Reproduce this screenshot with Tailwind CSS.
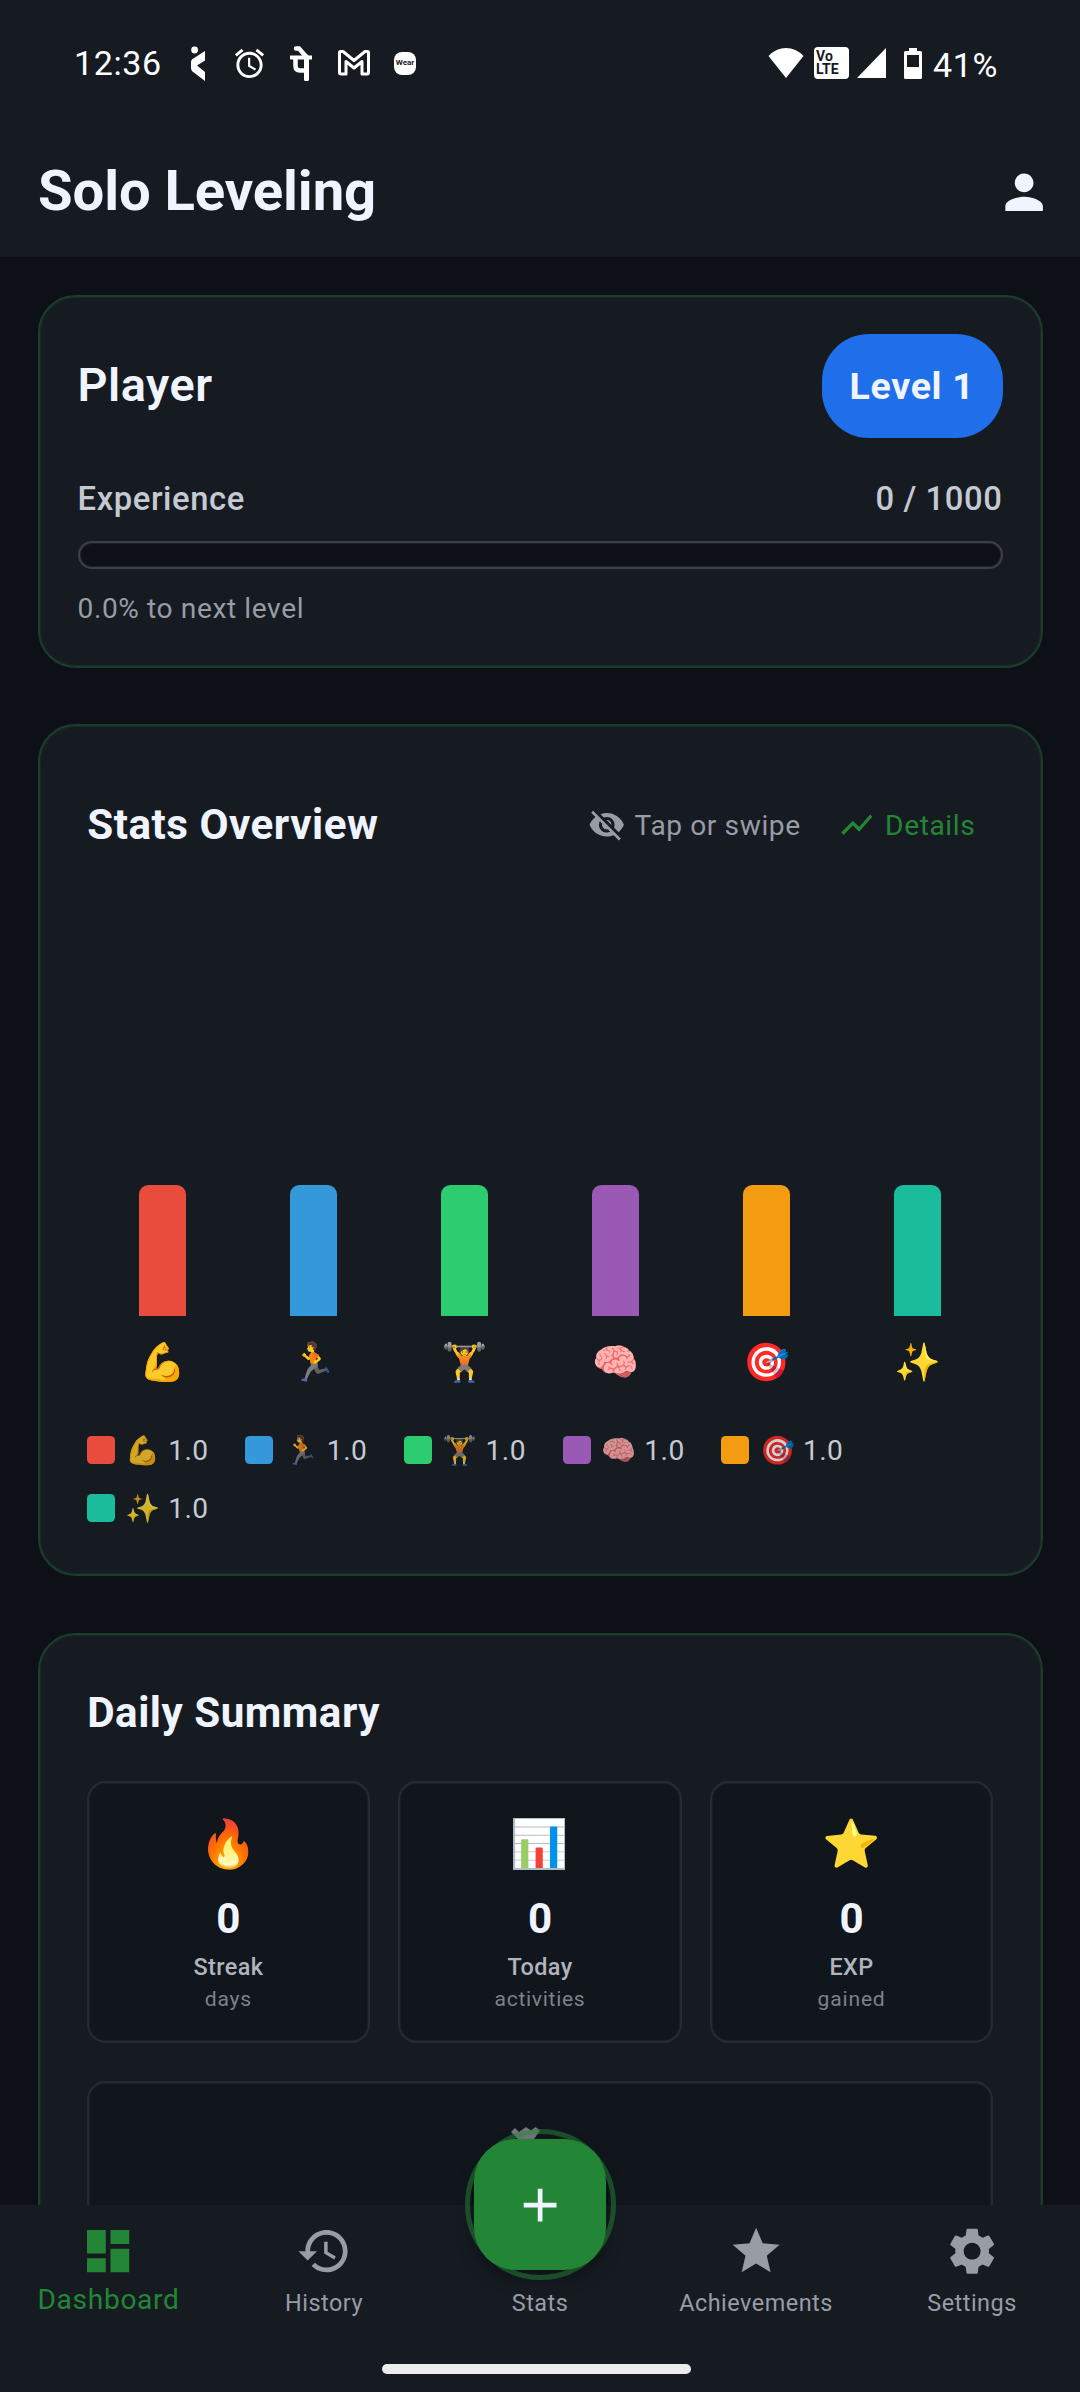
<!DOCTYPE html>
<html lang="en">
<head>
<meta charset="utf-8">
<title>Solo Leveling</title>
<script src="https://cdn.jsdelivr.net/npm/@tailwindcss/browser@4"></script>
</head>
<body class="bg-[#0d1017]">
<div class="flex h-[2392px] w-[1080px] flex-col overflow-hidden bg-[#0d1017] font-['Roboto','Noto_Color_Emoji',sans-serif] text-[#f0f4ff]">

  <header class="h-[257px] shrink-0 bg-[#161b22]">
    <!-- Status bar -->
    <div class="flex h-[124px] items-center justify-between pr-[82px] pl-[74px] pt-[2px] text-white">
      <div class="flex items-center">
        <span class="w-[88px] text-[34px] leading-[40px] tracking-[0.6px]">12:36</span>
        <svg class="ml-[26px] h-[36px] w-[20px]" viewBox="0 0 20 36" fill="currentColor"><circle cx="6.6" cy="5" r="3.4"/><path d="M17 6v9.500l-8 5 8 6.500v9L4.500 26.500Q3 25 3 23v-6q0-2 1.500-3z"/></svg>
        <svg class="ml-[24px] h-[35px] w-[35px]" viewBox="0 0 24 24" fill="currentColor"><path d="M22 5.720l-4.600-3.860-1.290 1.530 4.600 3.860L22 5.720zM7.880 3.390L6.600 1.860 2 5.710l1.290 1.530 4.590-3.850zM12.500 8H11v6l4.750 2.850.75-1.230-4-2.370V8zM12 4c-4.970 0-9 4.030-9 9s4.020 9 9 9c4.970 0 9-4.030 9-9s-4.030-9-9-9zm0 16c-3.870 0-7-3.130-7-7s3.130-7 7-7 7 3.130 7 7-3.130 7-7 7z"/></svg>
        <svg class="ml-[22px] h-[36px] w-[24px]" viewBox="0 0 24 36" fill="none" stroke="currentColor"><path d="M1 12.500h22" stroke-width="4"/><path d="M17.500 12v22" stroke-width="5" stroke-linecap="round"/><path d="M7 3.500h3l7 8" stroke-width="4.500" stroke-linecap="round"/><path d="M6.500 13v8q0 4.500 4.500 4.500h6" stroke-width="4.500"/></svg>
        <svg class="ml-[23.500px] h-[28px] w-[34px]" viewBox="0 0 34 28" fill="none" stroke="currentColor" stroke-width="3" stroke-linejoin="round"><path d="M2.500 3.500q0-1 1-1H6l11 9 11-9h2.500q1 0 1 1v20q0 1.500-1.500 1.500H25V12.500l-8 6.500-8-6.500V25H4q-1.500 0-1.500-1.500z"/></svg>
        <span class="ml-[23.500px] flex h-[23px] w-[22px] items-center justify-center rounded-[8px] bg-white text-[8px] leading-none font-bold text-[#161b22]">Wear</span>
      </div>
      <div class="flex items-center">
        <svg class="h-[30px] w-[36px]" viewBox="0 0 36 30" fill="currentColor"><path d="M18 30L0.500 8Q8 0 18 0t17.500 8z"/></svg>
        <span class="ml-[10px] flex h-[32px] w-[35px] flex-col justify-center rounded-[4px] bg-white pl-[2px] text-[14px] leading-[13.500px] font-bold text-[#161b22]"><span>Vo</span><span>LTE</span></span>
        <svg class="ml-[8px] h-[30px] w-[29px]" viewBox="0 0 29 30" fill="currentColor"><path d="M29 0v30H0z"/></svg>
        <svg class="ml-[18px] h-[31px] w-[18px]" viewBox="0 0 18 31"><path fill="currentColor" fill-rule="evenodd" d="M5 0h8v3h3.500q1.500 0 1.500 1.500v25q0 1.500-1.500 1.500h-15Q0 31 0 29.500v-25Q0 3 1.500 3H5zM3 7v12h12V7z"/></svg>
        <span class="ml-[11px] pt-[4px] text-[34px] leading-[40px] tracking-[0.6px]">41%</span>
      </div>
    </div>
    <!-- App bar -->
    <div class="flex h-[133px] items-center justify-between pr-[28px] pl-[38px]">
      <h1 class="text-[56.250px] leading-[66px] font-bold tracking-[-0.1px]">Solo Leveling</h1>
      <svg class="mt-[3px] h-[56.250px] w-[56.250px]" viewBox="0 0 24 24" fill="currentColor"><path d="M12 12c2.210 0 4-1.790 4-4s-1.790-4-4-4-4 1.790-4 4 1.790 4 4 4zm0 2c-2.670 0-8 1.340-8 4v2h16v-2c0-2.660-5.330-4-8-4z"/></svg>
    </div>
  </header>

  <main class="flex min-h-0 flex-1 flex-col gap-[56.250px] overflow-hidden px-[37.500px] pt-[37.500px]">
    <!-- Player -->
    <section class="h-[373px] shrink-0 rounded-[37.500px] border-2 border-[#1b3d2b] bg-[#161b22] px-[38px] pt-[37.500px] shadow-[inset_0_0_0_1px_rgba(27,61,43,0.4)]">
      <div class="flex h-[104px] items-center justify-between">
        <h2 class="pb-[2px] text-[46.875px] leading-[56px] font-semibold tracking-[0.5px]">Player</h2>
        <span class="flex h-[104px] w-[181px] items-center justify-center rounded-[46.875px] bg-[#1f6feb] text-[37.500px] font-bold tracking-[0.7px]">Level 1</span>
      </div>
      <div class="mt-[38.500px] flex justify-between text-[32.800px] leading-[44px] font-medium tracking-[0.6px] text-[#c5c9d2]">
        <span>Experience</span><span>0 / 1000</span>
      </div>
      <div class="mt-[20px] h-[28px] rounded-full border-2 border-[#3d4147] bg-[#0d1017] shadow-[inset_0_0_0_1px_rgba(61,65,71,0.4)]"></div>
      <p class="mt-[20px] text-[28.125px] leading-[39px] tracking-[0.6px] text-[#989ca5]">0.0% to next level</p>
    </section>

    <!-- Stats overview -->
    <section class="h-[852.500px] shrink-0 rounded-[37.500px] border-2 border-[#1b3d2b] bg-[#161b22] px-[47.200px] pt-[47.200px] shadow-[inset_0_0_0_1px_rgba(27,61,43,0.4)]">
      <div class="flex h-[104px] items-center justify-between">
        <h2 class="pl-[0.500px] text-[42.188px] leading-[50px] font-bold tracking-[0.5px]">Stats Overview</h2>
        <div class="flex items-center pr-[18px] text-[28.125px] leading-[38px] tracking-[0.6px]">
          <span class="flex items-center gap-[9.375px] text-[#989ca5]">
            <svg class="h-[37.500px] w-[37.500px]" viewBox="0 0 24 24" fill="currentColor"><path d="M12 7c2.760 0 5 2.240 5 5 0 .65-.13 1.260-.36 1.830l2.920 2.920c1.510-1.260 2.700-2.890 3.430-4.750-1.730-4.390-6-7.500-11-7.500-1.400 0-2.740.25-3.980.7l2.160 2.160C10.740 7.130 11.350 7 12 7zM2 4.270l2.280 2.280.46.46C3.080 8.300 1.780 10.020 1 12c1.730 4.390 6 7.500 11 7.500 1.550 0 3.030-.3 4.380-.84l.42.42L19.730 22 21 20.730 3.270 3 2 4.270zM7.530 9.800l1.550 1.550c-.05.21-.08.43-.08.65 0 1.660 1.340 3 3 3 .22 0 .44-.03.65-.08l1.550 1.550c-.67.33-1.410.53-2.200.53-2.760 0-5-2.240-5-5 0-.79.2-1.530.53-2.200zm4.310-.78l3.150 3.150.02-.16c0-1.660-1.340-3-3-3l-.17.010z"/></svg>
            <span class="pt-[2px]">Tap or swipe</span>
          </span>
          <span class="ml-[37.500px] flex items-center gap-[9.375px] text-[#238636]">
            <svg class="h-[37.500px] w-[37.500px]" viewBox="0 0 24 24" fill="currentColor"><path d="M3.500 18.490l6-6.010 4 4L22 6.920l-1.410-1.410-7.090 7.970-4-4L2 16.990z"/></svg>
            <span class="pt-[2px]">Details</span>
          </span>
        </div>
      </div>
      <div class="grid h-[439.500px] grid-cols-6 items-end justify-items-center">
        <div class="h-[131.250px] w-[46.875px] rounded-t-[9.375px] bg-[#e74c3c]"></div>
        <div class="h-[131.250px] w-[46.875px] rounded-t-[9.375px] bg-[#3498db]"></div>
        <div class="h-[131.250px] w-[46.875px] rounded-t-[9.375px] bg-[#2ecc71]"></div>
        <div class="h-[131.250px] w-[46.875px] rounded-t-[9.375px] bg-[#9b59b6]"></div>
        <div class="h-[131.250px] w-[46.875px] rounded-t-[9.375px] bg-[#f39c12]"></div>
        <div class="h-[131.250px] w-[46.875px] rounded-t-[9.375px] bg-[#1abc9c]"></div>
      </div>
      <div class="grid h-[91px] grid-cols-6 items-center justify-items-center text-[37.500px] leading-[44px]">
        <span>💪</span><span>🏃</span><span>🏋️</span><span>🧠</span><span>🎯</span><span>✨</span>
      </div>
      <div class="mt-[22.500px] flex flex-wrap gap-x-[37.500px] gap-y-[18.750px] text-[28.125px] leading-[39.500px] tracking-[0.5px] text-[#c5c9d2]">
        <span class="flex w-[121.200px] items-center gap-[10.500px] whitespace-nowrap"><i class="h-[28px] w-[28px] shrink-0 rounded-[4.688px] bg-[#e74c3c]"></i><span class="pt-px"><span class="opacity-80">💪</span> 1.0</span></span>
        <span class="flex w-[121.200px] items-center gap-[10.500px] whitespace-nowrap"><i class="h-[28px] w-[28px] shrink-0 rounded-[4.688px] bg-[#3498db]"></i><span class="pt-px"><span class="opacity-80">🏃</span> 1.0</span></span>
        <span class="flex w-[121.200px] items-center gap-[10.500px] whitespace-nowrap"><i class="h-[28px] w-[28px] shrink-0 rounded-[4.688px] bg-[#2ecc71]"></i><span class="pt-px"><span class="opacity-80">🏋️</span> 1.0</span></span>
        <span class="flex w-[121.200px] items-center gap-[10.500px] whitespace-nowrap"><i class="h-[28px] w-[28px] shrink-0 rounded-[4.688px] bg-[#9b59b6]"></i><span class="pt-px"><span class="opacity-80">🧠</span> 1.0</span></span>
        <span class="flex w-[121.200px] items-center gap-[10.500px] whitespace-nowrap"><i class="h-[28px] w-[28px] shrink-0 rounded-[4.688px] bg-[#f39c12]"></i><span class="pt-px"><span class="opacity-80">🎯</span> 1.0</span></span>
        <span class="-mt-px flex w-[121.200px] items-center gap-[10.500px] whitespace-nowrap"><i class="h-[28px] w-[28px] shrink-0 rounded-[4.688px] bg-[#1abc9c]"></i><span class="pt-px"><span class="opacity-80">✨</span> 1.0</span></span>
      </div>
    </section>

    <!-- Daily summary -->
    <section class="h-[800px] shrink-0 rounded-[37.500px] border-2 border-[#1b3d2b] bg-[#161b22] px-[47.200px] pt-[47.200px] shadow-[inset_0_0_0_1px_rgba(27,61,43,0.4)]">
      <h2 class="pl-[0.500px] text-[42.188px] leading-[62px] font-bold tracking-[0.5px]">Daily Summary</h2>
      <div class="mt-[37px] grid grid-cols-3 gap-[28.125px] text-center">
        <div class="h-[262px] rounded-[18.750px] border-2 border-[#262b32] bg-[#11161d] pt-[26px] shadow-[inset_0_0_0_1px_rgba(38,43,50,0.4)]">
          <div class="text-[46.875px] leading-[70px]">🔥</div>
          <div class="mt-[10px] text-[42.188px] leading-[60px] font-bold">0</div>
          <div class="mt-[2px] text-[23.438px] leading-[32px] font-medium tracking-[0.4px] text-[#b0b4bc]">Streak</div>
          <div class="mt-px text-[21.094px] leading-[30px] tracking-[0.8px] text-[#7d8189]">days</div>
        </div>
        <div class="h-[262px] rounded-[18.750px] border-2 border-[#262b32] bg-[#11161d] pt-[26px] shadow-[inset_0_0_0_1px_rgba(38,43,50,0.4)]">
          <div class="text-[46.875px] leading-[70px]">📊</div>
          <div class="mt-[10px] text-[42.188px] leading-[60px] font-bold">0</div>
          <div class="mt-[2px] text-[23.438px] leading-[32px] font-medium tracking-[0.4px] text-[#b0b4bc]">Today</div>
          <div class="mt-px text-[21.094px] leading-[30px] tracking-[0.7px] text-[#7d8189]">activities</div>
        </div>
        <div class="h-[262px] rounded-[18.750px] border-2 border-[#262b32] bg-[#11161d] pt-[26px] shadow-[inset_0_0_0_1px_rgba(38,43,50,0.4)]">
          <div class="text-[46.875px] leading-[70px]">⭐</div>
          <div class="mt-[10px] text-[42.188px] leading-[60px] font-bold">0</div>
          <div class="mt-[2px] text-[23.438px] leading-[32px] font-medium tracking-[0.4px] text-[#b0b4bc]">EXP</div>
          <div class="mt-px text-[21.094px] leading-[30px] tracking-[0.8px] text-[#7d8189]">gained</div>
        </div>
      </div>
      <div class="mt-[38.500px] flex h-[300px] justify-center rounded-[18.750px] border-2 border-[#262b32] bg-[#11161d] pt-[43px] shadow-[inset_0_0_0_1px_rgba(38,43,50,0.4)]">
        <svg class="h-[40px] w-[60px]" viewBox="0 0 60 40" fill="#74777d"><path d="M1 6l4-4 4 4 7-5 5 3.500L25.500 1 30 4.500 24 13H8z"/></svg>
      </div>
    </section>
  </main>

  <!-- Bottom navigation -->
  <nav class="relative flex h-[187px] shrink-0 flex-col bg-[#161b22]">
    <div class="grid h-[159px] grid-cols-5 justify-items-center pt-[18px] text-[23.438px] leading-[30px] tracking-[0.5px] text-[#989ca5]">
      <div class="flex flex-col items-center text-[#238636]">
        <svg class="h-[56.250px] w-[56.250px]" viewBox="0 0 24 24" fill="currentColor"><path d="M3 13h8V3H3v10zm0 8h8v-6H3v6zm10 0h8V11h-8v10zm0-18v6h8V3h-8z"/></svg>
        <span class="mt-[3px] pl-px text-[28.125px] leading-[36px] tracking-[0.7px]">Dashboard</span>
      </div>
      <div class="flex flex-col items-center">
        <svg class="h-[56.250px] w-[56.250px]" viewBox="0 0 24 24" fill="currentColor"><path d="M13 3c-4.970 0-9 4.030-9 9H1l3.890 3.890.07.14L9 12H6c0-3.870 3.130-7 7-7s7 3.130 7 7-3.130 7-7 7c-1.930 0-3.680-.79-4.940-2.060l-1.420 1.420C8.270 19.990 10.510 21 13 21c4.970 0 9-4.030 9-9s-4.030-9-9-9zm-1 5v5l4.280 2.540.72-1.210-3.500-2.080V8H12z"/></svg>
        <span class="mt-[9px]">History</span>
      </div>
      <div class="flex flex-col items-center">
        <span class="mt-[65.250px]">Stats</span>
      </div>
      <div class="flex flex-col items-center">
        <svg class="h-[56.250px] w-[56.250px]" viewBox="0 0 24 24" fill="currentColor"><path d="M12 17.270L18.180 21l-1.640-7.030L22 9.240l-7.190-.61L12 2 9.190 8.630 2 9.240l5.460 4.730L5.820 21z"/></svg>
        <span class="mt-[9px]">Achievements</span>
      </div>
      <div class="flex flex-col items-center">
        <svg class="h-[56.250px] w-[56.250px]" viewBox="0 0 24 24" fill="currentColor"><path d="M19.140 12.940c.04-.3.060-.61.060-.94 0-.32-.02-.64-.07-.94l2.030-1.580c.18-.14.23-.41.12-.61l-1.920-3.320c-.12-.22-.37-.29-.59-.22l-2.390.96c-.5-.38-1.030-.7-1.620-.94l-.36-2.540c-.04-.24-.24-.41-.48-.41h-3.840c-.24 0-.43.17-.47.41l-.36 2.540c-.59.24-1.130.57-1.620.94l-2.390-.96c-.22-.08-.47 0-.59.22L2.740 8.870c-.12.21-.08.47.12.61l2.030 1.580c-.05.3-.09.63-.09.94s.02.64.07.94l-2.030 1.580c-.18.14-.23.41-.12.61l1.920 3.320c.12.22.37.29.59.22l2.390-.96c.5.38 1.030.7 1.620.94l.36 2.540c.05.24.24.41.48.41h3.840c.24 0 .44-.17.47-.41l.36-2.540c.59-.24 1.130-.56 1.620-.94l2.390.96c.22.08.47 0 .59-.22l1.920-3.320c.12-.22.070-.47-.12-.61l-2.010-1.580zM12 15.600c-1.980 0-3.600-1.620-3.600-3.600s1.620-3.600 3.600-3.600 3.600 1.620 3.600 3.600-1.620 3.600-3.600 3.600z"/></svg>
        <span class="mt-[9px]">Settings</span>
      </div>
    </div>
    <div class="mr-[7px] h-[10px] w-[309px] self-center rounded-full bg-[#ececec]"></div>

    <!-- Floating add button with ring -->
    <button class="absolute top-[-66px] left-[474px] flex h-[131px] w-[132px] items-center justify-center rounded-[42px] bg-[#238636] pt-px shadow-[0_8px_16px_rgba(0,0,0,0.35)]">
      <svg class="h-[56.250px] w-[56.250px]" viewBox="0 0 24 24" fill="#f0f4ff"><path d="M19 13h-6v6h-2v-6H5v-2h6V5h2v6h6v2z"/></svg>
    </button>
    <div class="absolute top-[-76px] left-[464.500px] h-[151px] w-[151px] rounded-full border-[5px] border-[#238636]/50"></div>
  </nav>
</div>
</body>
</html>
